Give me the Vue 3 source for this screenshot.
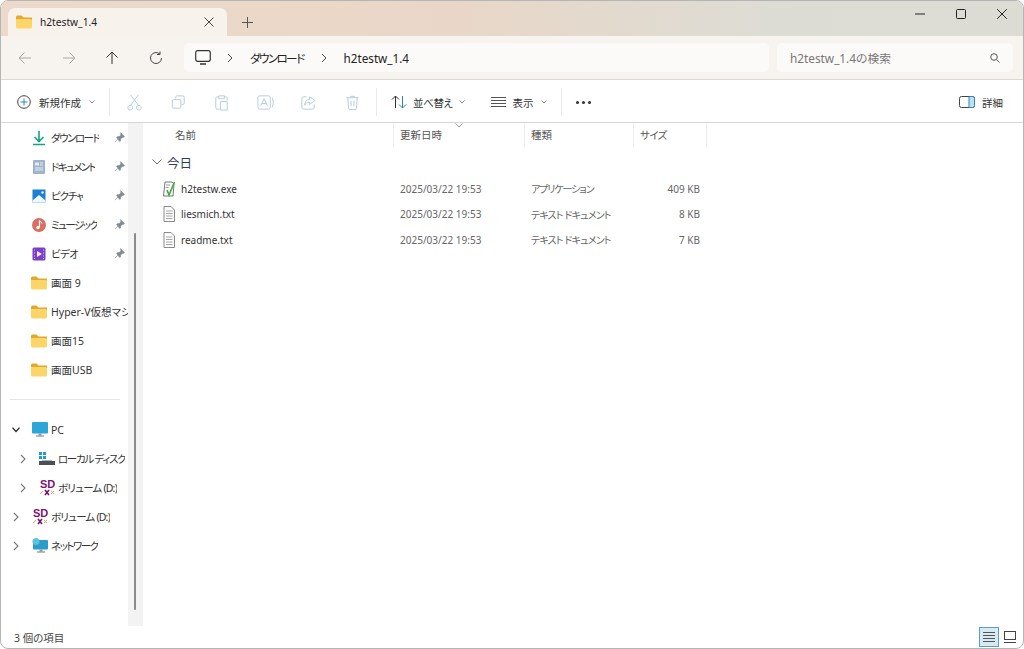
<script setup>
const pinned = [
  { name: "ダウンロード", icon: "download", fit: "fit-15" },
  { name: "ドキュメント", icon: "document", fit: "fit-16" },
  { name: "ピクチャ", icon: "picture", fit: "fit-12" },
  { name: "ミュージック", icon: "music", fit: "fit-16" },
  { name: "ビデオ", icon: "video", fit: "fit-06" },
];
const folders = ["画面 9", "Hyper-V仮想マシン", "画面15", "画面USB"];
const cmdIcons = [
  "M6 2l8 11M14 2L6 13M5.500 13a2.500 2.500 0 1 0 .1 0zM14.500 13a2.500 2.500 0 1 0 .1 0z",
  "M7 6V4.500A1.500 1.500 0 0 1 8.500 3h6A1.500 1.500 0 0 1 16 4.500v6a1.500 1.500 0 0 1-1.500 1.500H13M5 7h6a1.500 1.500 0 0 1 1.500 1.500v6A1.500 1.500 0 0 1 11 16H5a1.500 1.500 0 0 1-1.500-1.500v-6A1.500 1.500 0 0 1 5 7z",
  "M7 4H5.500A1.500 1.500 0 0 0 4 5.500v10A1.500 1.500 0 0 0 5.500 17H8M13 4h1.500A1.500 1.500 0 0 1 16 5.500V8M7 3h6v3H7zM9 9h7v9H9z",
  "M4 3h9a2 2 0 0 1 2 2v10a2 2 0 0 1-2 2H4a2 2 0 0 1-2-2V5a2 2 0 0 1 2-2zM5 13.500L8.500 6l3.500 7.500M6.300 11h4.400M17 5c1.500 3 1.500 7 0 10",
  "M8 4H5a2 2 0 0 0-2 2v9a2 2 0 0 0 2 2h9a2 2 0 0 0 2-2v-3M11 4l6 4-6 4V9.800c-2.500 0-4 1-5 3 0-3.500 2-6 5-6z",
  "M3.500 5h13M8 5V3.500h4V5M5 5l.8 11a1.500 1.500 0 0 0 1.500 1.400h5.400a1.500 1.500 0 0 0 1.500-1.400L15 5M8.500 8v6M11.500 8v6",
];
const files = [
  { name: "h2testw.exe", kind: "exe", type: "アプリケーション", fit: "fit-11", size: "409 KB" },
  { name: "liesmich.txt", kind: "txt", type: "テキスト ドキュメント", fit: "fit-08", size: "8 KB" },
  { name: "readme.txt", kind: "txt", type: "テキスト ドキュメント", fit: "fit-08", size: "7 KB" },
];
</script>

<template>
  <div class="window">
    <header class="titlebar">
      <div class="tab">
        <svg class="folder" viewBox="0 0 16 14" width="16" height="14">
          <path d="M0 2a1.500 1.500 0 0 1 1.500-1.500h4L7.500 2.500H16V5H0z" fill="#e2a92f" />
          <path d="M0 4h14.500A1.500 1.500 0 0 1 16 5.500V12a1.500 1.500 0 0 1-1.500 1.500h-13A1.500 1.500 0 0 1 0 12z" fill="#fbd568" />
        </svg>
        <span class="tab-title">h2testw_1.4</span>
        <svg class="tab-close" viewBox="0 0 10 10" width="10" height="10"><path d="M.5.500l9 9M9.500.500l-9 9" stroke="#444" fill="none" /></svg>
      </div>
      <svg class="tab-new" viewBox="0 0 11 11" width="11" height="11"><path d="M5.500 0v11M0 5.500h11" stroke="#555" fill="none" /></svg>
      <div class="win-controls">
        <svg viewBox="0 0 10 10" width="10" height="10"><path d="M0 5h10" stroke="#222" fill="none" /></svg>
        <svg viewBox="0 0 10 10" width="10" height="10"><rect x=".5" y=".5" width="9" height="9" rx="1" stroke="#222" fill="none" /></svg>
        <svg viewBox="0 0 10 10" width="10" height="10"><path d="M.2.200l9.600 9.600M9.800.200L.2 9.800" stroke="#222" fill="none" /></svg>
      </div>
    </header>

    <nav class="navbar">
      <div class="nav-buttons">
        <svg viewBox="0 0 14 14" width="14" height="14"><path d="M13 7H1M6.500 1.500L1 7l5.500 5.500" stroke="#a9a8a5" fill="none" /></svg>
        <svg viewBox="0 0 14 14" width="14" height="14"><path d="M1 7h12M7.500 1.500L13 7l-5.500 5.500" stroke="#a9a8a5" fill="none" /></svg>
        <svg viewBox="0 0 14 14" width="14" height="14"><path d="M7 13V1M1.500 6.500L7 1l5.500 5.500" stroke="#333" fill="none" /></svg>
        <svg viewBox="0 0 14 14" width="14" height="14"><path d="M12.500 7A5.500 5.500 0 1 1 10.500 2.800M11 .5v3H8" stroke="#444" fill="none" /></svg>
      </div>
      <div class="address">
        <svg class="pc-icon" viewBox="0 0 16 15" width="16" height="15"><rect x=".7" y=".7" width="14.600" height="10.600" rx="2" stroke="#333" fill="none" stroke-width="1.200" /><path d="M5 14h6" stroke="#333" stroke-width="1.400" /></svg>
        <svg class="crumb-sep" viewBox="0 0 6 10" width="6" height="10"><path d="M1 1l4 4-4 4" stroke="#444" fill="none" /></svg>
        <span class="crumb fit-17">ダウンロード</span>
        <svg class="crumb-sep second" viewBox="0 0 6 10" width="6" height="10"><path d="M1 1l4 4-4 4" stroke="#444" fill="none" /></svg>
        <span class="crumb">h2testw_1.4</span>
      </div>
      <div class="search">
        <span>h2testw_1.4の検索</span>
        <svg viewBox="0 0 10 10" width="10" height="10"><circle cx="4" cy="4" r="3.300" stroke="#555" fill="none" /><path d="M6.500 6.500L9.500 9.500" stroke="#555" /></svg>
      </div>
    </nav>

    <div class="toolbar">
      <div class="tool new-btn">
        <svg viewBox="0 0 14 14" width="14" height="14"><circle cx="7" cy="7" r="6.300" stroke="#444" fill="none" /><path d="M7 3.500v7M3.500 7h7" stroke="#2a86b8" fill="none" /></svg>
        <span>新規作成</span>
        <svg class="chev" viewBox="0 0 6 4" width="6" height="4"><path d="M.5.500L3 3 5.500.500" stroke="#888" fill="none" /></svg>
      </div>
      <i class="tool-sep first"></i>
      <div class="cmd-icons">
        <svg v-for="(d, i) in cmdIcons" :key="i" viewBox="0 0 20 20" width="19" height="19"><path :d="d" stroke="#b3cad9" fill="none" /></svg>
      </div>
      <i class="tool-sep"></i>
      <div class="tool sort-btn">
        <svg viewBox="0 0 16 14" width="16" height="14"><path d="M4.500 13V1M1 4.500L4.500 1 8 4.500" stroke="#333" fill="none" /><path d="M11.500 1v12M8 9.500l3.500 3.500L15 9.500" stroke="#2a86b8" fill="none" /></svg>
        <span class="fit-04">並べ替え</span>
        <svg class="chev" viewBox="0 0 6 4" width="6" height="4"><path d="M.5.500L3 3 5.500.500" stroke="#888" fill="none" /></svg>
      </div>
      <div class="tool view-btn">
        <svg viewBox="0 0 15 10" width="15" height="10"><path d="M0 .5h15M0 3.500h15M0 6.500h15M0 9.500h15" stroke="#555" fill="none" /></svg>
        <span>表示</span>
        <svg class="chev" viewBox="0 0 6 4" width="6" height="4"><path d="M.5.500L3 3 5.500.500" stroke="#888" fill="none" /></svg>
      </div>
      <i class="tool-sep third"></i>
      <div class="more"><b></b><b></b><b></b></div>
      <div class="tool details-btn">
        <svg viewBox="0 0 16 12" width="16" height="12"><rect x=".5" y=".5" width="15" height="11" rx="2" stroke="#444" fill="none" /><path d="M10 .5h3.500a2 2 0 0 1 2 2v7a2 2 0 0 1-2 2H10z" fill="#bfe0f2" stroke="#2a86b8" /></svg>
        <span>詳細</span>
      </div>
    </div>

    <div class="body">
      <aside class="sidebar">
        <div class="tree">
          <div v-for="item in pinned" :key="item.name" class="tree-row pinned">
            <svg class="tree-icon" viewBox="0 0 16 16" width="16" height="16">
              <template v-if="item.icon === 'download'">
                <path d="M8 1v10M3.500 7L8 11.500 12.500 7" stroke="#16a085" stroke-width="1.600" fill="none" />
                <path d="M2 14.500h12" stroke="#16a085" stroke-width="1.600" />
              </template>
              <template v-else-if="item.icon === 'document'">
                <rect x="2" y="1" width="12" height="14" rx="1" fill="#9fb4cc" />
                <rect x="4" y="3.500" width="4" height="3" fill="#e4ecf4" />
                <path d="M9 4h3M9 6h3M4 9h8M4 11h8" stroke="#e4ecf4" />
              </template>
              <template v-else-if="item.icon === 'picture'">
                <rect x="1.500" y="1.500" width="13" height="13" fill="#1d7fd0" />
                <path d="M1.500 14.500v-2L8 7l6.500 5.500v2z" fill="#eef5fb" />
                <circle cx="11.500" cy="4.500" r="1.200" fill="#eef5fb" />
              </template>
              <template v-else-if="item.icon === 'music'">
                <circle cx="8" cy="8" r="7" fill="#d96f63" />
                <path d="M8.500 3.500v6.500" stroke="#fff" stroke-width="1.200" />
                <path d="M8.500 3.500c.5 1.500 2.500 1.500 2.500 3" stroke="#fff" fill="none" />
                <circle cx="7" cy="10.500" r="1.700" fill="#fff" />
              </template>
              <template v-else>
                <rect x="1.500" y="1.500" width="13" height="13" rx="1.500" fill="#7b3fc7" />
                <path d="M6 5l5 3-5 3z" fill="#f4e9ff" />
                <path d="M3.500 3.500v1M3.500 6.500v1M3.500 9.500v1M3.500 12v1M12.500 3.500v1M12.500 6.500v1M12.500 9.500v1M12.500 12v1" stroke="#d8c2f2" />
              </template>
            </svg>
            <span class="tree-label" :class="item.fit">{{ item.name }}</span>
            <svg class="pin" viewBox="0 0 10 10" width="11" height="11"><path d="M5.800.5l3.700 3.700-1 .6-1 .1-1.500 1.500-.2 1.800-.6.5L2.400 5l.5-.6 1.800-.2 1.500-1.500.1-1zM3.500 6.500L.8 9.200" fill="#7f8c96" stroke="#7f8c96" stroke-width=".6" /></svg>
          </div>
          <div v-for="name in folders" :key="name" class="tree-row pinned">
            <svg class="tree-icon" viewBox="0 0 16 14" width="16" height="14">
              <path d="M0 2a1.500 1.500 0 0 1 1.500-1.500h4L7.500 2.500H16V5H0z" fill="#e2a92f" />
              <path d="M0 4h14.500A1.500 1.500 0 0 1 16 5.500V12a1.500 1.500 0 0 1-1.500 1.500h-13A1.500 1.500 0 0 1 0 12z" fill="#fbd568" />
            </svg>
            <span class="tree-label">{{ name }}</span>
          </div>
          <div class="tree-divider"></div>
          <div class="tree-row top">
            <svg class="expander" viewBox="0 0 8 6" width="8" height="6"><path d="M.5.700L4 4.500 7.500.700" stroke="#222" stroke-width="1.200" fill="none" /></svg>
            <svg class="tree-icon" viewBox="0 0 16 15" width="16" height="15">
              <rect x="0" y="0" width="16" height="11.500" rx="1" fill="#2aa7d6" />
              <path d="M6.500 11.500h3v2h-3z" fill="#8a9aa5" /><path d="M4 14h8" stroke="#6d7b85" />
            </svg>
            <span class="tree-label">PC</span>
          </div>
          <div class="tree-row child">
            <svg class="expander" viewBox="0 0 6 10" width="6" height="10"><path d="M1 1l4 4-4 4" stroke="#777" stroke-width="1.100" fill="none" /></svg>
            <svg class="tree-icon" viewBox="0 0 16 14" width="16" height="14">
              <rect x="0" y="0" width="3" height="3" fill="#1f9ad6" /><rect x="4" y="0" width="3" height="3" fill="#1f9ad6" /><rect x="0" y="4" width="3" height="3" fill="#1f9ad6" /><rect x="4" y="4" width="3" height="3" fill="#1f9ad6" />
              <rect x="0" y="9" width="16" height="4" fill="#4a5056" /><path d="M3 8.500h10" stroke="#aab2b8" />
            </svg>
            <span class="tree-label fit-13">ローカル ディスク</span>
          </div>
          <div class="tree-row child">
            <svg class="expander" viewBox="0 0 6 10" width="6" height="10"><path d="M1 1l4 4-4 4" stroke="#777" stroke-width="1.100" fill="none" /></svg>
            <svg class="tree-icon" viewBox="0 0 16 17" width="16" height="17">
              <text x="1" y="9" class="sd-mark">SD</text>
              <path d="M1 15l3-3M12 12l3 3M12 15l3-3" stroke="#e0a060" />
              <path d="M6 11l4 5M10 11l-4 5" stroke="#7a1470" stroke-width="1.600" />
            </svg>
            <span class="tree-label fit-08">ボリューム (D:)</span>
          </div>
          <div class="tree-row top">
            <svg class="expander" viewBox="0 0 6 10" width="6" height="10"><path d="M1 1l4 4-4 4" stroke="#777" stroke-width="1.100" fill="none" /></svg>
            <svg class="tree-icon" viewBox="0 0 16 17" width="16" height="17">
              <text x="1" y="9" class="sd-mark">SD</text>
              <path d="M1 15l3-3M12 12l3 3M12 15l3-3" stroke="#e0a060" />
              <path d="M6 11l4 5M10 11l-4 5" stroke="#7a1470" stroke-width="1.600" />
            </svg>
            <span class="tree-label fit-08">ボリューム (D:)</span>
          </div>
          <div class="tree-row top">
            <svg class="expander" viewBox="0 0 6 10" width="6" height="10"><path d="M1 1l4 4-4 4" stroke="#777" stroke-width="1.100" fill="none" /></svg>
            <svg class="tree-icon" viewBox="0 0 16 15" width="16" height="15">
              <rect x="1" y="2" width="15" height="9.500" rx="1" fill="#2a9cc8" />
              <circle cx="4" cy="3.500" r="3.500" fill="#5cc0e0" />
              <path d="M7.500 11.500h3v2h-3z" fill="#8a9aa5" /><path d="M5 14h8" stroke="#6d7b85" />
            </svg>
            <span class="tree-label fit-15">ネットワーク</span>
          </div>
        </div>
        <div class="sidebar-track"><div class="sidebar-thumb"></div></div>
      </aside>

      <main class="files">
        <div class="file-grid file-head">
          <span class="col-name">名前</span>
          <span>更新日時</span>
          <span>種類</span>
          <span class="fit-06">サイズ</span>
          <svg class="sort-mark" viewBox="0 0 8 5" width="8" height="5"><path d="M.5.500L4 4 7.500.500" stroke="#999" fill="none" /></svg>
        </div>
        <div class="group">
          <svg viewBox="0 0 10 6" width="10" height="6"><path d="M.5.500L5 5 9.500.500" stroke="#666" fill="none" /></svg>
          <span>今日</span>
        </div>
        <div v-for="f in files" :key="f.name" class="file-grid file-row">
          <div class="file-name">
            <svg v-if="f.kind === 'exe'" viewBox="0 0 14 16" width="14" height="16">
              <path d="M3 1h7l2 2-1 12H1.500z" fill="#fff" stroke="#777" />
              <path d="M4 4h4M3.500 6.500h3" stroke="#999" />
              <path d="M5 9l2 5 5.500-13" stroke="#3cae3c" stroke-width="1.600" fill="none" />
            </svg>
            <svg v-else viewBox="0 0 14 16" width="14" height="16">
              <path d="M2 .5h7L12.500 4v11.500H2z" fill="#fff" stroke="#8a8a8a" />
              <path d="M4 5h6.500M4 7.500h6.500M4 10h6.500M4 12.500h6.500" stroke="#a5a5a5" />
            </svg>
            <span>{{ f.name }}</span>
          </div>
          <span class="dim">2025/03/22 19:53</span>
          <span class="dim" :class="f.fit">{{ f.type }}</span>
          <span class="dim size">{{ f.size }}</span>
        </div>
      </main>
    </div>

    <footer class="statusbar">
      <span>3 個の項目</span>
      <div class="view-toggle">
        <div class="toggle active">
          <svg viewBox="0 0 12 10" width="12" height="10"><path d="M0 .5h12M0 3.500h12M0 6.500h12M0 9.500h12" stroke="#555" fill="none" /></svg>
        </div>
        <div class="toggle">
          <svg viewBox="0 0 12 12" width="12" height="12"><rect x=".5" y=".5" width="11" height="8" stroke="#444" fill="none" /><path d="M0 11.500h12" stroke="#444" /></svg>
        </div>
      </div>
    </footer>
  </div>
</template>

<style>
html,
body {
  margin: 0;
  background: #fff;
}
</style>

<style scoped>
.window {
  width: 1024px;
  height: 649px;
  box-sizing: border-box;
  display: flex;
  flex-direction: column;
  overflow: hidden;
  background: #fff;
  border: 1px solid #b5b5b5;
  border-radius: 8px;
  font-family: "Noto Sans", "Noto Sans CJK JP", sans-serif;
  font-feature-settings: "palt";
  font-size: 10.5px;
  color: #333;
}

/* katakana is set much narrower in the original UI font */
.fit-04 { letter-spacing: -0.4px; }
.fit-06 { letter-spacing: -0.6px; }
.fit-08 { letter-spacing: -0.8px; }
.fit-11 { letter-spacing: -1.1px; }
.fit-12 { letter-spacing: -1.2px; }
.fit-13 { letter-spacing: -1.3px; }
.fit-15 { letter-spacing: -1.5px; }
.fit-16 { letter-spacing: -1.6px; }
.fit-17 { letter-spacing: -1.7px; }

.titlebar {
  flex: 0 0 35px;
  display: flex;
  align-items: flex-end;
  padding-left: 7px;
  background: linear-gradient(90deg, #ecd9c9 0%, #e8d7c8 45%, #dddcd4 75%, #dcdcd5 100%);
}

.tab {
  width: 219px;
  height: 28px;
  box-sizing: border-box;
  display: flex;
  align-items: center;
  padding: 0 13px 0 8px;
  background: #f8f2ec;
  border-radius: 7px 7px 0 0;
}

.tab-title {
  margin-left: 8px;
  flex: 1;
  font-size: 10.2px;
  color: #222;
}

.tab-new {
  align-self: center;
  margin: 7px 0 0 15px;
}

.win-controls {
  align-self: flex-start;
  display: flex;
  gap: 31px;
  margin-left: auto;
  padding: 8px 16px 0 0;
}

.navbar {
  flex: 0 0 44px;
  display: flex;
  align-items: center;
  gap: 8px;
  padding: 0 10px 0 0;
  box-sizing: border-box;
  background: #f7f3ee;
  border-bottom: 1px solid #dcd8d2;
}

.nav-buttons {
  display: flex;
  gap: 29.500px;
  padding-left: 17px;
  width: 183px;
  box-sizing: border-box;
  flex: none;
}

.address {
  width: 585px;
  height: 29px;
  flex: none;
  display: flex;
  align-items: center;
  margin-left: -8px;
  padding-left: 11px;
  box-sizing: border-box;
  background: #fcfaf8;
  border-radius: 5px;
  font-size: 11.7px;
  color: #222;
}

.crumb-sep {
  margin: 0 17px 0 16px;
}

.crumb-sep.second {
  margin: 0 17px 0 17px;
}

.search {
  flex: 1;
  height: 29px;
  display: flex;
  align-items: center;
  justify-content: space-between;
  padding: 0 13px;
  background: #fcfaf8;
  border-radius: 5px;
  font-size: 11.8px;
  color: #777;
}

.toolbar {
  flex: 0 0 43px;
  display: flex;
  align-items: center;
  box-sizing: border-box;
  padding-top: 2px;
  border-bottom: 1px solid #d8d6d2;
  background: #fff;
}

.tool {
  display: flex;
  align-items: center;
  color: #333;
  font-size: 10.5px;
}

.new-btn {
  margin-left: 16px;
  gap: 8px;
}

.tool-sep {
  display: block;
  width: 1px;
  height: 28px;
  background: #e9e9e9;
}

.tool-sep.first {
  margin-left: 14px;
}

.tool-sep.third {
  margin-left: 14px;
}

.cmd-icons {
  display: flex;
  gap: 24.600px;
  padding: 0 14px 0 15px;
}

.sort-btn {
  margin-left: 14px;
  gap: 6px;
}

.view-btn {
  margin-left: 26px;
  gap: 7px;
}

.more {
  display: flex;
  gap: 3px;
  margin-left: 14px;
}

.more b {
  width: 3px;
  height: 3px;
  border-radius: 50%;
  background: #333;
}

.details-btn {
  margin-left: auto;
  margin-right: 20px;
  gap: 7px;
}

.body {
  flex: 1;
  min-height: 0;
  display: flex;
}

.sidebar {
  flex: 0 0 142px;
  display: flex;
}

.tree {
  width: 127px;
  flex: none;
  overflow: hidden;
}

.tree-row {
  height: 29px;
  display: flex;
  align-items: center;
  white-space: nowrap;
  position: relative;
}

.tree-icon {
  flex: none;
}

.tree-label {
  font-size: 10.5px;
  color: #333;
  overflow: hidden;
}

.pinned {
  padding-left: 30px;
  gap: 4px;
}

.pin {
  position: absolute;
  right: 3px;
  top: 9px;
}

.tree-divider {
  height: 1px;
  margin: 15px 8px 15px 9px;
  background: #e5e5e5;
}

.top {
  padding-left: 11px;
}

.top .expander {
  width: 8px;
  margin-right: 12px;
}

.top .tree-icon {
  margin-right: 3px;
}

.child {
  padding-left: 19px;
}

.child .expander {
  margin-right: 13px;
}

.child .tree-icon {
  margin-right: 3px;
}

.sd-mark {
  font-family: "Liberation Sans", sans-serif;
  font-size: 11px;
  font-weight: 700;
  fill: #7a1470;
}

.sidebar-track {
  width: 15px;
  flex: none;
  box-sizing: border-box;
  padding: 110px 0 16px 6px;
  background: #f3f3f3;
}

.sidebar-thumb {
  width: 2px;
  height: 100%;
  background: #8a8a8a;
  border-radius: 1px;
}

.files {
  flex: 1;
  min-width: 0;
}

.file-grid {
  display: grid;
  grid-template-columns: 251px 131px 109px 73px;
  align-items: center;
}

.file-head {
  position: relative;
  height: 24px;
  color: #555;
}

.file-head > span {
  height: 24px;
  line-height: 24px;
  padding-left: 6px;
  border-right: 1px solid #ececec;
  box-sizing: border-box;
}

.file-head > span.col-name {
  padding-left: 32px;
}

.sort-mark {
  position: absolute;
  left: 312px;
  top: 0;
}

.group {
  height: 28px;
  margin-top: 1px;
  display: flex;
  align-items: center;
  gap: 5px;
  padding-left: 9px;
  font-size: 12.5px;
  color: #2f3f52;
}

.file-row {
  height: 25.500px;
  font-size: 10px;
}

.file-name {
  display: flex;
  align-items: center;
  gap: 5px;
  padding-left: 19px;
  color: #333;
}

.dim {
  padding-left: 6px;
  color: #666;
}

.size {
  text-align: right;
  padding-right: 7px;
}

.statusbar {
  flex: 0 0 22px;
  display: flex;
  align-items: center;
  justify-content: space-between;
  padding-left: 13px;
  color: #444;
}

.view-toggle {
  display: flex;
  gap: 1px;
  padding-right: 3px;
}

.toggle {
  width: 20px;
  height: 20px;
  box-sizing: border-box;
  display: flex;
  align-items: center;
  justify-content: center;
}

.toggle.active {
  background: #d6eaf3;
  border: 1px solid #5f9fb5;
}
</style>
